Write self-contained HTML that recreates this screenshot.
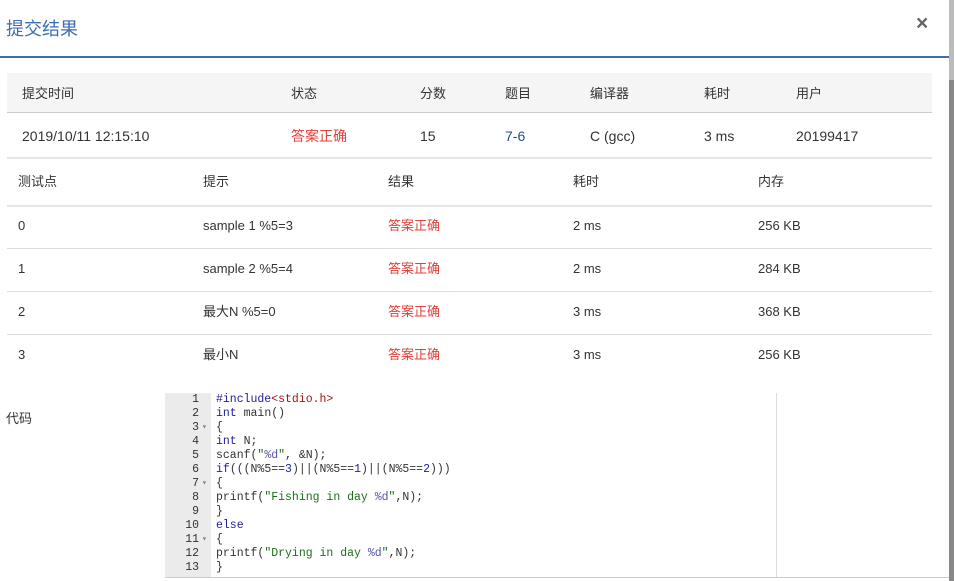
<!DOCTYPE html>
<html><head><meta charset="utf-8"><style>
body{margin:0;width:954px;height:581px;overflow:hidden;background:#fff;font-family:"Liberation Sans","Noto Sans CJK SC",sans-serif;color:#333;position:relative}
.a{position:absolute;white-space:nowrap}
.t{font-size:13px;line-height:16px}
.red{color:#e0403a}
.code{font-family:"Liberation Mono","DejaVu Sans Mono",monospace;font-size:11.5px;line-height:14px}
.hl{position:absolute;left:7px;width:925px;height:1px;background:#ddd}
</style></head><body>
<div class="a" style="left:6px;top:15px;font-size:18px;color:#3d6db5">提交结果</div>
<div class="a" style="left:916px;top:12px;font-size:21px;color:#666;font-weight:bold">×</div>
<div class="a" style="left:0;top:56px;width:949px;height:2px;background:#3d6db5"></div>
<div class="a" style="left:949px;top:0;width:5px;height:581px;background:#888"></div>
<div class="a" style="left:949px;top:0;width:5px;height:80px;background:#bbb"></div>

<div class="a" style="left:7px;top:73px;width:925px;height:40px;background:#f5f5f5"></div>
<div class="hl" style="top:112px;background:#ccc"></div>
<div class="t">
<div class="a" style="left:22px;top:86px">提交时间</div>
<div class="a" style="left:291px;top:86px">状态</div>
<div class="a" style="left:420px;top:86px">分数</div>
<div class="a" style="left:505px;top:86px">题目</div>
<div class="a" style="left:590px;top:86px">编译器</div>
<div class="a" style="left:704px;top:86px">耗时</div>
<div class="a" style="left:796px;top:86px">用户</div>
</div>
<div style="font-size:14px;line-height:16px">
<div class="a" style="left:22px;top:128px">2019/10/11 12:15:10</div>
<div class="a red" style="left:291px;top:128px">答案正确</div>
<div class="a" style="left:420px;top:128px">15</div>
<div class="a" style="left:505px;top:128px;color:#1f4e8c">7-6</div>
<div class="a" style="left:590px;top:128px">C (gcc)</div>
<div class="a" style="left:704px;top:128px">3 ms</div>
<div class="a" style="left:796px;top:128px">20199417</div>
</div>
<div class="hl" style="top:157px;height:2px;background:#e5e5e5"></div>
<div class="t">
<div class="a" style="left:18px;top:174px">测试点</div>
<div class="a" style="left:203px;top:174px">提示</div>
<div class="a" style="left:388px;top:174px">结果</div>
<div class="a" style="left:573px;top:174px">耗时</div>
<div class="a" style="left:758px;top:174px">内存</div>
</div>
<div class="hl" style="top:205px;height:2px;background:#e5e5e5"></div>
<div class="hl" style="top:248px"></div>
<div class="hl" style="top:291px"></div>
<div class="hl" style="top:334px"></div>
<div style="font-size:13px;line-height:16px">
<div class="a" style="left:18px;top:218px">0</div><div class="a" style="left:203px;top:218px">sample 1 %5=3</div><div class="a red" style="left:388px;top:218px">答案正确</div><div class="a" style="left:573px;top:218px">2 ms</div><div class="a" style="left:758px;top:218px">256 KB</div>
<div class="a" style="left:18px;top:261px">1</div><div class="a" style="left:203px;top:261px">sample 2 %5=4</div><div class="a red" style="left:388px;top:261px">答案正确</div><div class="a" style="left:573px;top:261px">2 ms</div><div class="a" style="left:758px;top:261px">284 KB</div>
<div class="a" style="left:18px;top:304px">2</div><div class="a" style="left:203px;top:304px">最大N %5=0</div><div class="a red" style="left:388px;top:304px">答案正确</div><div class="a" style="left:573px;top:304px">3 ms</div><div class="a" style="left:758px;top:304px">368 KB</div>
<div class="a" style="left:18px;top:347px">3</div><div class="a" style="left:203px;top:347px">最小N</div><div class="a red" style="left:388px;top:347px">答案正确</div><div class="a" style="left:573px;top:347px">3 ms</div><div class="a" style="left:758px;top:347px">256 KB</div>
</div>
<div class="a t" style="left:6px;top:411px">代码</div>
<div class="a" style="left:165px;top:393px;width:46px;height:185px;background:#ebebeb"></div>
<div class="a" style="left:776px;top:393px;width:1px;height:185px;background:#ddd"></div>
<div class="a" style="left:165px;top:577px;width:784px;height:1px;background:#ccc"></div>
<div class="a code" style="left:165px;top:393px;width:34px;text-align:right;color:#333">1<br>2<br>3<br>4<br>5<br>6<br>7<br>8<br>9<br>10<br>11<br>12<br>13</div>
<div class="a code" style="left:202px;top:393px;font-size:8px;color:#777;line-height:14px"><br><br>▾<br><br><br><br>▾<br><br><br><br>▾</div>
<div class="a code" style="left:216px;top:393px;color:#333"><span style="color:#21219a">#include</span><span style="color:#a11">&lt;stdio.h&gt;</span><br><span style="color:#21219a">int</span> main()<br>{<br><span style="color:#21219a">int</span> N;<br>scanf(<span style="color:#1a6d1a">"<span style="color:#55a">%d</span>"</span>, &amp;N);<br><span style="color:#21219a">if</span>(((N%5==<span style="color:#21219a">3</span>)||(N%5==<span style="color:#21219a">1</span>)||(N%5==<span style="color:#21219a">2</span>)))<br>{<br>printf(<span style="color:#1a6d1a">"Fishing in day <span style="color:#55a">%d</span>"</span>,N);<br>}<br><span style="color:#21219a">else</span><br>{<br>printf(<span style="color:#1a6d1a">"Drying in day <span style="color:#55a">%d</span>"</span>,N);<br>}</div>
</body></html>
